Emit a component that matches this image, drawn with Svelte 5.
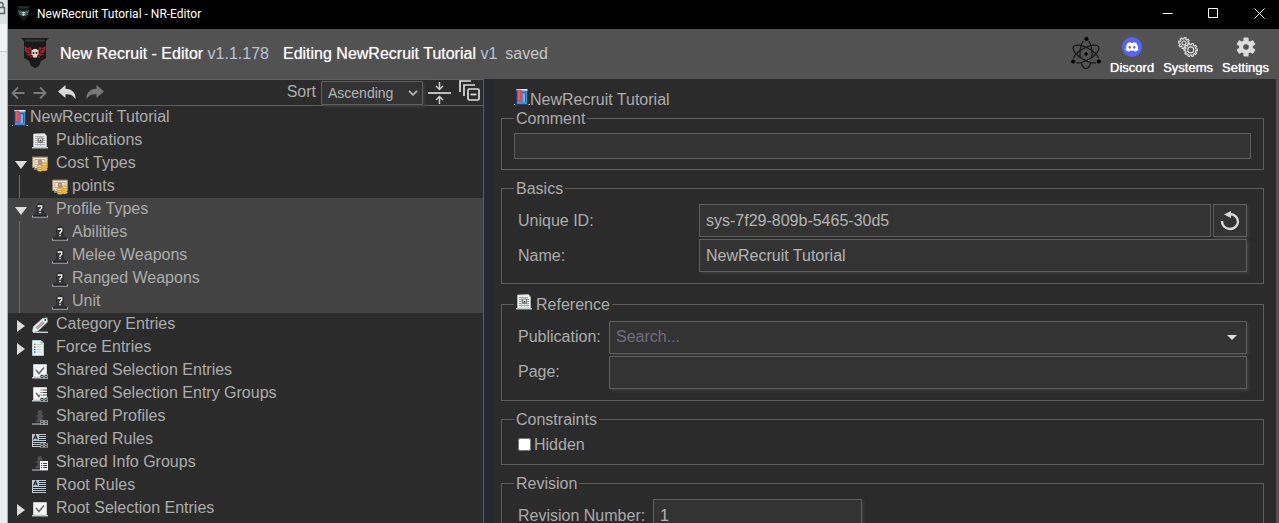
<script>
  let sort = $state('Ascending');
  let comment = $state('');
  let uniqueId = $state('sys-7f29-809b-5465-30d5');
  let name = $state('NewRecruit Tutorial');
  let publication = $state('');
  let page = $state('');
  let hidden = $state(false);
  let revision = $state('1');

  const tree = [
    { label: 'Publications', icon: 'publication' },
    { label: 'Cost Types', icon: 'cost', arrow: 'open', children: ['points'] },
    {
      label: 'Profile Types',
      icon: 'profile',
      arrow: 'open',
      selected: true,
      children: ['Abilities', 'Melee Weapons', 'Ranged Weapons', 'Unit'],
    },
    { label: 'Category Entries', icon: 'tag', arrow: 'closed' },
    { label: 'Force Entries', icon: 'force', arrow: 'closed' },
    { label: 'Shared Selection Entries', icon: 'checkLink' },
    { label: 'Shared Selection Entry Groups', icon: 'checkGroup' },
    { label: 'Shared Profiles', icon: 'pawnLink' },
    { label: 'Shared Rules', icon: 'ruleLink' },
    { label: 'Shared Info Groups', icon: 'pawnGroup' },
    { label: 'Root Rules', icon: 'rule' },
    { label: 'Root Selection Entries', icon: 'check', arrow: 'closed' },
  ];

  // Outline of a cog with n square teeth
  function cog(cx, cy, outer, inner, n, turn = 0) {
    const step = (Math.PI * 2) / n;
    const pts = [];
    for (let i = 0; i < n; i++) {
      const a = i * step + turn;
      for (const [r, o] of [[inner, -0.3], [outer, -0.2], [outer, 0.2], [inner, 0.3]]) {
        pts.push(`${(cx + r * Math.cos(a + o * step)).toFixed(2)} ${(cy + r * Math.sin(a + o * step)).toFixed(2)}`);
      }
    }
    return 'M' + pts.join('L') + 'Z';
  }
</script>

{#snippet link()}
  <path d="M8 11.500h8v4H8z" fill="#c9d2d2" />
  <circle cx="10" cy="13.500" r="1.300" fill="none" stroke="#222" />
  <circle cx="14" cy="13.500" r="1.300" fill="none" stroke="#222" />
{/snippet}

{#snippet list()}
  <path d="M8 6h8v9H8z" fill="#f4f6f6" />
  <path d="M9 8.500h1M11 8.500h4M9 10.500h1M11 10.500h4M9 12.500h1M11 12.500h4" stroke="#444" />
{/snippet}

{#snippet pawn()}
  <path d="M8 1a2.500 2.500 0 0 1 2.300 3.500L9.700 6h1.800v2h-1.300c.2 2 1 3.500 3.300 5v2h-11v-2c2.300-1.500 3.100-3 3.300-5H4.500V6h1.800L5.700 4.500A2.500 2.500 0 0 1 8 1z" fill="#4e4e4e" />
  <path d="M1 13.500h14v1H1z" fill="#111" />
  <path d="M0 15h16" stroke="#c3cfd2" stroke-width="1" />
{/snippet}

{#snippet icon(kind)}
  <svg class="icon" width="16" height="16" viewBox="0 0 16 16" aria-hidden="true">
    {#if kind === 'book'}
      <path d="M0 15h1v1H0zM14.500 15h1.500v1h-1.500z" fill="#cfd6dc" />
      <path d="M2.500 15.500V.500h11v15z" fill="#4a8bcc" stroke="#1d3f73" />
      <path d="M8 3.500h3.500V13" fill="none" stroke="#2c62a3" />
      <path d="M9 4.500h2V13H9z" fill="#76aee2" />
      <path d="M2.500 0h11v1.500h-11z" fill="#e8eef4" />
      <path d="M3.500 1h3.500v11.500l-1.800-1.500-1.700 1.500z" fill="#f2545c" stroke="#a83440" stroke-width=".5" />
    {:else if kind === 'publication'}
      <path d="M0 14h16v1.500H0z" fill="#b9c5cb" />
      <path d="M1.500 14V1l11-.500L14.500 3v11z" fill="#eceeee" stroke="#c7c9c9" stroke-width=".6" />
      <path d="M3 3.500h9M3 5.500h3M3 7.500h3M3 9.500h3M3 11.500h10M10.500 5.500H13M10.500 7.500H13M10.500 9.500H13" stroke="#9a9a9a" stroke-width=".8" />
      <path d="M5.500 3v10M8.500 10v3M11 3v10" stroke="#aaa" stroke-width=".6" />
      <path d="M6.500 5h4v4.500h-4z" fill="#e0e0e0" stroke="#666" stroke-width=".8" />
      <path d="M7 8.500 8.500 6.500l1.500 2z" fill="#333" />
    {:else if kind === 'cost'}
      <path d="M.500 1h15v10.500H.500z" fill="#cdb69a" stroke="#a88d6e" stroke-width=".8" />
      <path d="M1.500 2h13v8.500h-13z" fill="#f1e6d5" />
      <path d="M3 3.500h10v5H3z" fill="none" stroke="#b39e85" stroke-width=".8" />
      <circle cx="8" cy="6" r="2" fill="#b6a088" stroke="#6d5b49" stroke-width=".6" />
      <path d="M3 11.500h5M2 13h4" stroke="#e6d8bf" />
      <g fill="#f5cd63" stroke="#a67d2c" stroke-width=".5">
        <ellipse cx="8" cy="14" rx="3" ry="1.400" /><ellipse cx="8" cy="12.200" rx="3" ry="1.400" /><ellipse cx="8" cy="10.400" rx="3" ry="1.400" />
        <ellipse cx="12.500" cy="13.500" rx="3" ry="1.400" /><ellipse cx="12.500" cy="11.700" rx="3" ry="1.400" /><ellipse cx="12.500" cy="9.900" rx="3" ry="1.400" /><ellipse cx="12.500" cy="8.200" rx="3" ry="1.400" />
      </g>
    {:else if kind === 'profile'}
      <path d="M4.500 5.500C4.500 3 5.800 1.500 8 1.500s3.500 1.500 3.500 4L11 9.500c.6 1.500 1.500 2.500 3 3.500v1.500H2V13c1.500-1 2.400-2 3-3.500z" fill="#363636" stroke="#262626" stroke-width=".8" />
      <path d="M0 15h16M.500 13.500v1M15.500 13.500v1" fill="none" stroke="#c3cfd2" stroke-width="1" />
      <path d="M1 13.500h14v1H1z" fill="#151515" />
      <path d="M6.300 5V4h3.400v2.300L8 7.500v1.400M8 9.800v1.400" fill="none" stroke="#f4f4f4" stroke-width="1.300" />
    {:else if kind === 'tag'}
      <path d="M1 15.300h15" stroke="#c9d2d4" stroke-width="1.400" />
      <path d="M10.500 1.500 15 .700l.500 4.300L6 14l-4.500 1.500L.500 14l1-4.500z" fill="#edf2f2" stroke="#9fb1b5" stroke-width=".8" />
      <path d="m4 10.500 6.500-6L12.200 6 5.500 12z" fill="#c4aeab" stroke="#8d7472" stroke-width=".7" />
      <circle cx="13.200" cy="3" r=".9" fill="#444" />
    {:else if kind === 'force'}
      <path d="M.500 15.500V.500H9L11.500 3v12.500z" fill="#e8f4f3" stroke="#b9cfcf" />
      <path d="M8.500.500v3h3z" fill="#9fbbbc" />
      <path d="M4.500 4.500h5M4.500 7h5M4.500 9.500h5M4.500 12h5" stroke="#b9c6c8" stroke-width=".8" />
      <path d="M2 4.500h1.500" stroke="#4a9c43" stroke-width="1.300" /><path d="M2 7h1.500" stroke="#c44" stroke-width="1.300" /><path d="M2 9.500h1.500M2 12h1.500" stroke="#3c66cf" stroke-width="1.300" />
    {:else if kind === 'check' || kind === 'checkLink' || kind === 'checkGroup'}
      <path d="M0 14h16v1.500H0z" fill="#bac6ca" />
      <path d="M1.500 1.500h13v12.500h-13z" fill="#f5f5f5" stroke="#c8cccc" />
      <path d="m4 7 3 3.500 5-6" fill="none" stroke="#6c6c6c" stroke-width="1.600" />
      {#if kind === 'checkLink'}{@render link()}{/if}
      {#if kind === 'checkGroup'}
        <path d="M8 2h7v9H8z" fill="#f7f7f7" />
        <path d="M8.500 4h1M10.500 4H15M8.500 6.500h1M10.500 6.500H15M8.500 9h1M10.500 9H15" stroke="#444" />
        {@render link()}
      {/if}
    {:else if kind === 'pawnLink'}
      {@render pawn()}{@render link()}
    {:else if kind === 'pawnGroup'}
      {@render pawn()}{@render list()}
    {:else if kind === 'rule' || kind === 'ruleLink'}
      <path d="M0 2h14v13H0z" fill="#bccad0" />
      <path d="M7 3.500h7M7 5.500h7M7 7.500h7M1 9.500h13M1 11.500h13M1 13.500h13" stroke="#20282b" />
      <path d="M1.500 7.500 3.500 3 5.500 7.500M2.500 6h2" fill="none" stroke="#20282b" stroke-width="1.100" />
      {#if kind === 'ruleLink'}{@render link()}{/if}
    {/if}
  </svg>
{/snippet}

{#snippet crest(size, accent)}
  <svg width={size} height={size} viewBox="0 0 30 30" aria-hidden="true">
    <path d="M1 0h28l-3 3v17l-5 3-2 5-4 2-4-2-2-5-5-3V3z" fill="#181a1a" />
    <path d="M5 1.500h20v2H5z" fill="#343737" />
    <path d="M4.500 8l3 2 3-1 1.500 3h6l1.500-3 3 1 3-2-.500 5-2 1.500 1 2.500-3 .500-1.500 2.500-3-2-1.500 1-1.500-1-3 2L9 17.500l-3-.500 1-2.500L5 13z" fill={accent} />
    <path d="M7 11l5 3M23 11l-5 3M7 16l5-1.500M23 16l-5-1.500M9 19l3-2M21 19l-3-2" stroke="#1c1214" />
    <path d="M11.500 12.500q3.500-3.500 7 0v4l-1.500 1v2h-4v-2l-1.500-1z" fill="#ddd8c8" />
    <circle cx="13.500" cy="15" r="1" fill="#222" /><circle cx="16.500" cy="15" r="1" fill="#222" />
  </svg>
{/snippet}

<div class="desktop">
  <div class="behind" aria-hidden="true">
    <svg width="8" height="16" viewBox="0 0 8 16">
      <path d="M-4 7.500h8.500v6H-4M-1 7V4.500a2 2 0 0 1 4 0V7" fill="none" stroke="#5f6368" stroke-width="1.500" />
    </svg>
  </div>

  <div class="window">
    <div class="titlebar">
      {@render crest(15, '#3b8790')}
      <span class="caption">NewRecruit Tutorial - NR-Editor</span>
      <div class="controls">
        <button aria-label="Minimize"><svg width="11" height="11"><path d="M.500 5.500h10" /></svg></button>
        <button aria-label="Maximize"><svg width="11" height="11"><path d="M.500.500h9v9h-9z" /></svg></button>
        <button aria-label="Close"><svg width="11" height="11"><path d="m.500.500 10 10M10.500.500l-10 10" /></svg></button>
      </div>
    </div>

    <header>
      {@render crest(30, '#a3222b')}
      <h1>New Recruit - Editor <span class="version">v1.1.178</span></h1>
      <p>Editing NewRecruit Tutorial <span class="version">v1</span></p>
      <span class="saved">saved</span>
      <nav>
        <a class="electron" href="#app" aria-label="Desktop app">
          <svg width="30" height="34" viewBox="0 0 30 34" fill="none" stroke="#161616" stroke-width="1.200">
            <ellipse cx="15" cy="18" rx="14.500" ry="6" transform="rotate(30 15 18)" pathLength="100" stroke-dasharray="0 5 90 5" />
            <ellipse cx="15" cy="18" rx="14.500" ry="6" transform="rotate(-30 15 18)" pathLength="100" stroke-dasharray="45 10 45 0" />
            <ellipse cx="15" cy="18" rx="14.500" ry="6" transform="rotate(90 15 18)" pathLength="100" stroke-dasharray="12 7 26 10 26 7 12 0" />
            <g fill="#000" stroke="none"><circle cx="15" cy="18" r="1.700" /><circle cx="15.500" cy="3" r="2.100" /><circle cx="2.200" cy="25.500" r="2.100" /><circle cx="27.800" cy="25.500" r="2.100" /></g>
          </svg>
        </a>
        <a href="#discord">
          <svg width="20" height="20" viewBox="0 0 20 20">
            <circle cx="10" cy="10" r="10" fill="#5865f2" />
            <path d="M5.600 6.100Q7 5.300 8.500 5l.5.900h2l.5-.9q1.500.3 2.900 1.100 2 3.300 1.900 7-1.600 1.200-3.400 1.600l-.8-1.300q-2.200.6-4.400 0L7 14.700q-1.800-.4-3.400-1.600-.1-3.700 2-7z" fill="#fff" />
            <ellipse cx="7.800" cy="10.300" rx="1.200" ry="1.400" fill="#5865f2" /><ellipse cx="12.200" cy="10.300" rx="1.200" ry="1.400" fill="#5865f2" />
          </svg>
          <span>Discord</span>
        </a>
        <a href="#systems">
          <svg width="20" height="20" viewBox="0 0 20 20" fill="none" stroke="#e4e4e4" stroke-width="1.100">
            <path d={cog(6, 6, 5.600, 4.100, 8, 0.2)} /><circle cx="6" cy="6" r="2" />
            <path d={cog(12.700, 12.900, 6.700, 5.200, 10)} fill="#525252" /><circle cx="12.700" cy="12.900" r="3" />
          </svg>
          <span>Systems</span>
        </a>
        <a href="#settings">
          <svg width="20" height="20" viewBox="0 0 20 20">
            <path d={cog(10, 10, 9, 6.300, 6, Math.PI / 2)} fill="#dcdcdc" stroke="#dcdcdc" stroke-width="1.400" stroke-linejoin="round" />
            <circle cx="10" cy="10" r="2.800" fill="#525252" />
          </svg>
          <span>Settings</span>
        </a>
      </nav>
    </header>

    <div class="body">
      <aside>
        <div class="toolbar">
          <button class="nav" aria-label="Back"><svg width="14" height="14" viewBox="0 0 14 14"><path d="M13.500 7H1.500M7 1.500 1.500 7 7 12.500" fill="none" stroke="#7a7a7a" stroke-width="1.800" /></svg></button>
          <button class="nav" aria-label="Forward"><svg width="14" height="14" viewBox="0 0 14 14"><path d="M.500 7h12M7 1.500 12.500 7 7 12.500" fill="none" stroke="#7a7a7a" stroke-width="1.800" /></svg></button>
          <button class="undo" aria-label="Undo"><svg width="18" height="15" viewBox="0 0 18 15"><path d="M0 6.500 7.500 0v3.700C14 4 18 7.500 17.500 14.500 15.500 10.500 13 9.300 7.500 9.300V13z" fill="#dadada" /></svg></button>
          <button class="redo" aria-label="Redo"><svg width="18" height="15" viewBox="0 0 18 15"><path d="M18 6.500 10.500 0v3.700C4 4 0 7.500.500 14.500 2.500 10.500 5 9.300 10.500 9.300V13z" fill="#777" /></svg></button>
          <label class="sort" for="sort">Sort</label>
          <div class="select">
            <select id="sort" bind:value={sort}>
              <option>Ascending</option>
              <option>Descending</option>
              <option>None</option>
            </select>
            <svg width="10" height="6" viewBox="0 0 10 6"><path d="m1 .800 4 4 4-4" fill="none" stroke="#b4b4b4" stroke-width="1.800" /></svg>
          </div>
          <button class="squeeze" aria-label="Collapse rows">
            <svg width="23" height="24" viewBox="0 0 23 24" fill="none" stroke="#d0d0d0" stroke-width="1.500"><path d="M0 12h23" stroke-width="1.800" /><path d="M11.500 1v7M8 5l3.500 3.500L15 5M11.500 23v-7M8 19l3.500-3.500L15 19" /></svg>
          </button>
          <button class="collapse" aria-label="Collapse all">
            <svg width="21" height="21" viewBox="0 0 21 21" fill="none" stroke="#dedede" stroke-width="1.700"><path d="M1 12V1h11M5 16V5h11" /><rect x="9" y="9" width="11" height="11" rx="1.500" /><path d="M11.500 14.500h6" /></svg>
          </button>
        </div>

        <div class="row root">{@render icon('book')}<span>NewRecruit Tutorial</span></div>
        {#each tree as node}
          <div class="node" class:selected={node.selected}>
            <div class="row">
              <span class="arrow">
                {#if node.arrow === 'open'}
                  <svg width="12" height="8"><path d="M0 0h12L6 8z" fill="#dcdcdc" /></svg>
                {:else if node.arrow === 'closed'}
                  <svg width="8" height="12"><path d="M0 0v12l8-6z" fill="#dcdcdc" /></svg>
                {/if}
              </span>
              {@render icon(node.icon)}
              <span>{node.label}</span>
            </div>
            {#if node.children}
              <div class="children">
                {#each node.children as child}
                  <div class="row">{@render icon(node.icon)}<span>{child}</span></div>
                {/each}
              </div>
            {/if}
          </div>
        {/each}
      </aside>

      <main>
        <h2>{@render icon('book')}<span>NewRecruit Tutorial</span></h2>

        <fieldset>
          <legend>Comment</legend>
          <input class="comment" aria-label="Comment" bind:value={comment} />
        </fieldset>

        <fieldset>
          <legend>Basics</legend>
          <div class="grid basics">
            <label for="uid">Unique ID:</label>
            <div class="joined">
              <input id="uid" class="flat" bind:value={uniqueId} />
              <button class="regen" aria-label="Generate new ID">
                <svg width="20" height="20" viewBox="0 0 20 20"><path d="M2 10a8 7.500 0 1 0 8-7" fill="none" stroke="#d8d8d8" stroke-width="2.400" /><path d="M4 3.500 11 0v7z" fill="#d8d8d8" /></svg>
              </button>
            </div>
            <label for="name">Name:</label>
            <input id="name" bind:value={name} />
          </div>
        </fieldset>

        <fieldset>
          <legend class="pictured">{@render icon('publication')}<span>Reference</span></legend>
          <div class="grid reference">
            <label for="publication">Publication:</label>
            <div class="combo">
              <input id="publication" placeholder="Search..." bind:value={publication} />
              <button aria-label="Show publications"><svg width="10" height="5"><path d="M0 0h10L5 5z" fill="#dcdcdc" /></svg></button>
            </div>
            <label for="page">Page:</label>
            <input id="page" bind:value={page} />
          </div>
        </fieldset>

        <fieldset>
          <legend>Constraints</legend>
          <label class="check"><input type="checkbox" bind:checked={hidden} />Hidden</label>
        </fieldset>

        <fieldset>
          <legend>Revision</legend>
          <div class="grid revision">
            <label for="revision">Revision Number:</label>
            <input id="revision" bind:value={revision} />
          </div>
        </fieldset>
      </main>
      <div class="scrollbar"></div>
    </div>
  </div>
</div>

<style>
  :global(body) {
    background: #2b2b2b;
  }
  * {
    box-sizing: border-box;
  }
  svg {
    display: block;
    flex: none;
  }
  button {
    display: flex;
    align-items: center;
    justify-content: center;
    padding: 0;
    border: 0;
    background: none;
  }
  .desktop {
    display: flex;
    height: 100vh;
    overflow: hidden;
    font: 16px/21px 'Liberation Sans', Arial, sans-serif;
    color: #acacac;
  }
  .behind {
    flex: none;
    width: 8px;
    background: linear-gradient(#dfe1e5 0 24px, #f1f3f4 24px 51px, #c8cacc 51px 52px, #ebeced 52px);
    border-right: 1px solid #aaa;
  }
  .window {
    display: flex;
    flex: 1;
    flex-direction: column;
    min-width: 0;
    background: #2b2b2b;
  }

  .titlebar {
    display: flex;
    flex: none;
    align-items: center;
    gap: 6px;
    height: 29px;
    padding: 0 4px 2px 8px;
    background: #000;
    color: #fff;
  }
  .caption {
    flex: 1;
    font: 12px/16px Roboto, 'Open Sans', sans-serif;
  }
  .controls {
    display: flex;
    gap: 14px;
  }
  .controls button {
    width: 32px;
    height: 26px;
  }
  .controls path {
    fill: none;
    stroke: #fff;
  }

  header {
    display: flex;
    flex: none;
    align-items: center;
    height: 50px;
    padding: 0 10px 2px 12px;
    background: #525252;
    color: #fff;
  }
  h1,
  header p {
    margin: 0 0 0 10px;
    font-size: 16px;
    font-weight: 400;
    text-shadow: 0 0 1px #fff9;
    white-space: nowrap;
  }
  header p {
    margin-left: 14px;
  }
  .version {
    color: #b9c3d6;
    text-shadow: none;
  }
  .saved {
    margin-left: 8px;
    color: #c6c6c6;
  }
  nav {
    display: flex;
    gap: 9px;
    align-items: center;
    margin-left: auto;
    padding-top: 6px;
  }
  nav a {
    display: flex;
    flex-direction: column;
    align-items: center;
    gap: 3px;
    color: #fff;
    font-size: 13px;
    line-height: 16px;
    text-decoration: none;
    text-shadow: 0 0 1px #fff;
  }
  .electron {
    padding-bottom: 7px;
  }

  .body {
    display: flex;
    flex: 1;
    min-height: 0;
  }
  aside {
    flex: 0 0 486px;
    border-right: 10px solid #27272f;
    overflow: hidden;
    box-shadow: inset -1px 0 #5e5e5e;
  }
  .toolbar {
    display: flex;
    align-items: center;
    height: 27px;
    padding: 0 4px 0 3px;
    border: solid #5e5e5e;
    border-width: 1px 0;
  }
  .nav {
    margin-right: 8px;
  }
  .undo {
    margin-left: 3px;
  }
  .redo {
    margin-left: 10px;
  }
  .sort {
    margin: 0 5px 2px auto;
  }
  .select {
    display: grid;
    align-items: center;
  }
  .select > * {
    grid-area: 1 / 1;
  }
  .select svg {
    justify-self: end;
    margin-right: 5px;
    pointer-events: none;
  }
  select {
    width: 102px;
    height: 24px;
    padding: 0 6px;
    border: 1px solid #5e5e5e;
    border-radius: 0;
    appearance: none;
    background: #333;
    color: #b4b4b4;
    font: 14px 'Liberation Sans', Arial, sans-serif;
    box-shadow: 2px 2px 3px #3c3c3c;
  }
  .squeeze {
    margin-left: 5px;
  }
  .collapse {
    margin: 0 0 4px 8px;
  }

  .row {
    display: flex;
    align-items: center;
    height: 23px;
    white-space: nowrap;
  }
  .row > span:last-child {
    padding-bottom: 2px;
  }
  .root {
    gap: 2px;
    padding-left: 4px;
  }
  .node > .row > .icon {
    margin-right: 8px;
  }
  .arrow {
    display: flex;
    justify-content: center;
    width: 10px;
    margin: 2px 6px 0 8px;
  }
  .selected {
    margin-right: 1px;
    background: #434343;
  }
  .children {
    margin-left: 11px;
    padding-left: 32px;
    border-left: 1px solid #6c6c6c;
  }
  .children .row {
    gap: 4px;
  }

  main {
    flex: 1;
    min-width: 0;
    padding: 10px 12px 0 7px;
    overflow: hidden;
  }
  .scrollbar {
    flex: none;
    width: 3px;
    background: #525252;
  }
  h2 {
    display: flex;
    margin: 0;
    padding-left: 13px;
    font-size: 16px;
    font-weight: 400;
  }
  fieldset {
    min-width: 0;
    margin: 0 0 10px;
    padding: 6px 12px 10px;
    border: 1px solid #5e5e5e;
  }
  legend {
    padding: 0 2px;
    line-height: 17px;
  }
  .pictured {
    display: flex;
    gap: 4px;
    height: 21px;
    line-height: 21px;
  }
  input {
    width: 100%;
    min-width: 0;
    height: 33px;
    padding: 0 6px;
    border: 1px solid #5e5e5e;
    background: #333;
    color: #b4b4b4;
    font: inherit;
    box-shadow: 2px 2px 3px #3c3c3c;
  }
  input::placeholder {
    color: #716c80;
  }
  .comment {
    display: block;
    height: 26px;
    box-shadow: none;
  }
  .flat {
    box-shadow: none;
  }
  .grid {
    display: grid;
    gap: 2px 0;
    align-items: center;
    padding: 1px 4px;
  }
  .basics {
    grid-template-columns: 181px 1fr;
  }
  .reference {
    grid-template-columns: 91px 1fr;
    padding-top: 0;
  }
  .reference label,
  .reference input {
    padding-bottom: 2px;
  }
  .revision {
    grid-template-columns: 135px 209px;
  }
  .joined {
    display: flex;
    gap: 2px;
  }
  .regen {
    flex: none;
    width: 34px;
    height: 33px;
    border: 1px solid #5e5e5e;
    background: #333;
    box-shadow: 2px 2px 3px #3c3c3c;
  }
  .combo {
    display: grid;
    align-items: center;
  }
  .combo > * {
    grid-area: 1 / 1;
  }
  .combo button {
    justify-self: end;
    width: 30px;
    height: 31px;
  }
  .check {
    display: flex;
    align-items: center;
    gap: 3px;
    height: 20px;
    padding-left: 4px;
  }
  .check input {
    width: 13px;
    height: 13px;
    margin: 0;
    box-shadow: none;
  }
</style>
